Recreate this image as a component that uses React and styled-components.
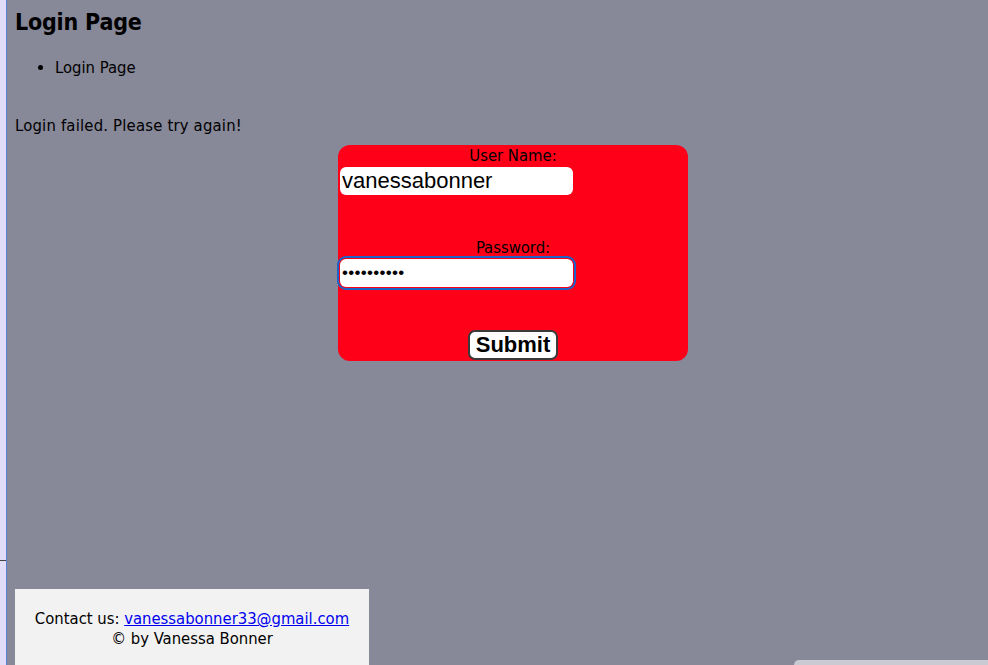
import React from "react";
import styled, { createGlobalStyle } from "styled-components";

const GlobalStyle = createGlobalStyle`
  html, body {
    margin: 0;
    padding: 0;
    height: 100%;
    background: #878898;
  }
  #root {
    min-height: 100%;
  }
`;

const Page = styled.div`
  display: flex;
  min-height: 665px;
  font-family: "DejaVu Sans Condensed", "DejaVu Sans", sans-serif;
  font-size: 16.5px;
  color: #000;
`;

const SideStrip = styled.div`
  position: relative;
  width: 6px;
  flex: none;
  background: #e1dcf8;
  border-right: 1px solid #5b7fd6;

  &::after {
    content: "";
    position: absolute;
    left: 0;
    top: 560px;
    width: 6px;
    height: 1px;
    background: #444;
  }
`;

const Main = styled.main`
  flex: 1;
  display: flex;
  flex-direction: column;
  padding: 0 8px;
`;

const Title = styled.h1`
  margin: 7px 0 5px;
  font-size: 23px;
  line-height: 30px;
  font-weight: bold;
  letter-spacing: -0.2px;
`;

const NavList = styled.ul`
  margin: 16px 0;
  padding-left: 40px;
  line-height: 20px;
`;

const Message = styled.p`
  margin: 22px 0 9px;
  line-height: 20px;
  letter-spacing: 0.2px;
`;

const LoginBox = styled.form`
  width: 350px;
  height: 216px;
  margin-left: 323px;
  background: #ff0019;
  border-radius: 12px;
  display: flex;
  flex-direction: column;
`;

const Label = styled.label`
  display: block;
  text-align: center;
  line-height: 20px;
  margin-top: ${(p) => p.$top}px;
`;

const Field = styled.input`
  box-sizing: border-box;
  width: 233px;
  height: 28px;
  margin: 1px 0 0 2px;
  padding: 0 2px;
  border: none;
  border-radius: 6px;
  background: #fff;
  font-family: "Liberation Sans", Arial, sans-serif;
  font-size: ${(p) => (p.type === "password" ? 17 : 22)}px;
  color: #000;
  outline: ${(p) => (p.$focused ? "2px solid #1a63c8" : "none")};
  outline-offset: ${(p) => (p.$focused ? "1px" : "0")};
  letter-spacing: ${(p) => (p.type === "password" ? "0.3px" : "0")};
`;

const SubmitButton = styled.button`
  align-self: center;
  margin-top: auto;
  margin-bottom: 1px;
  height: 30px;
  padding: 0 6px;
  background: #fff;
  border: 2px solid #3a3a3a;
  border-radius: 7px;
  font-family: "Liberation Sans", Arial, sans-serif;
  font-weight: bold;
  font-size: 22px;
  line-height: 24px;
  color: #000;
  cursor: pointer;
`;

const Spacer = styled.div`
  flex: 1;
`;

const Footer = styled.footer`
  margin-top: auto;
  width: 354px;
  height: 76px;
  box-sizing: border-box;
  padding-top: 20px;
  background: #f2f2f2;
  text-align: center;
  line-height: 20px;
`;

const MailLink = styled.a`
  color: #0000ee;
  text-decoration: underline;
`;

const CornerTab = styled.div`
  position: fixed;
  right: 0;
  bottom: 0;
  width: 194px;
  height: 5px;
  background: #c9cad2;
  border-top-left-radius: 5px;
`;

export default function App() {
  return (
    <>
      <GlobalStyle />
      <Page>
        <SideStrip />
        <Main>
          <Title>Login Page</Title>
          <NavList>
            <li>Login Page</li>
          </NavList>
          <Message>Login failed. Please try again!</Message>
          <LoginBox onSubmit={(e) => e.preventDefault()}>
            <Label $top={1} htmlFor="username">User Name:</Label>
            <Field id="username" type="text" defaultValue="vanessabonner" />
            <Label $top={43} htmlFor="password">Password:</Label>
            <Field id="password" type="password" defaultValue="vanessa123" $focused />
            <Spacer />
            <SubmitButton type="submit">Submit</SubmitButton>
          </LoginBox>
          <Footer>
            Contact us: <MailLink href="mailto:vanessabonner33@gmail.com">vanessabonner33@gmail.com</MailLink>
            <br />© by Vanessa Bonner
          </Footer>
        </Main>
        <CornerTab />
      </Page>
    </>
  );
}
